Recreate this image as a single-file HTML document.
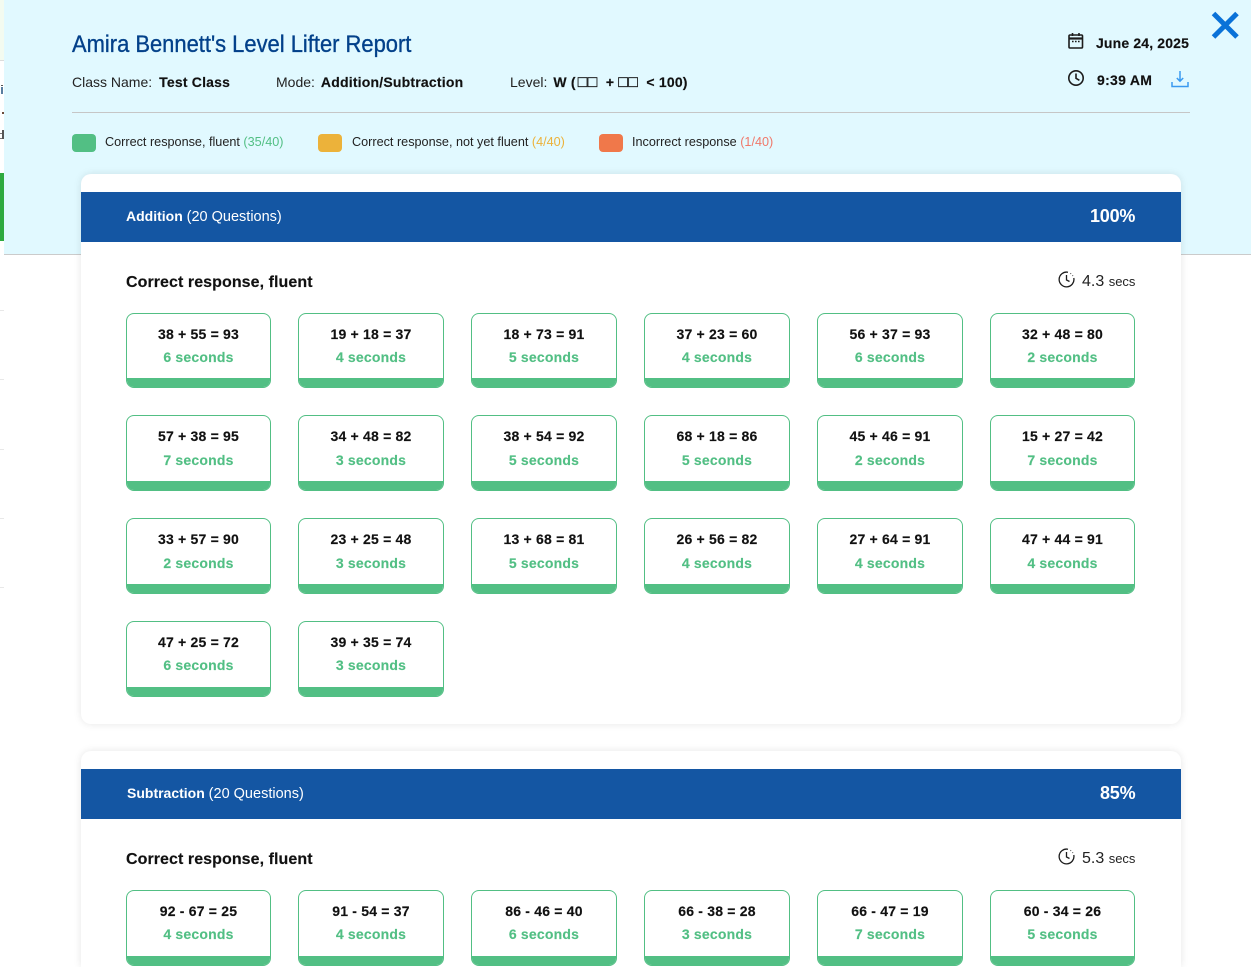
<!DOCTYPE html>
<html><head><meta charset="utf-8"><style>
*{box-sizing:border-box}
html,body{margin:0;padding:0;width:1251px;height:967px;overflow:hidden;background:#fff;font-family:"Liberation Sans",sans-serif;color:#1c1c1c}
#w{position:absolute;left:0;top:0;width:1251px;height:967px;overflow:hidden}
.a{position:absolute;white-space:nowrap}
.left{position:absolute;left:0;width:4px;height:1px;background:#e8e8e8}
#panel{position:absolute;left:4px;top:0;width:1247px;height:255px;background:#e1f9ff;border-bottom:1px solid #cbcbcb}
.sec{position:absolute;left:81px;width:1100px;background:#fff;border-radius:10px;box-shadow:0 0 8px rgba(0,0,0,.1)}
.bar{position:absolute;left:81px;width:1100px;height:50px;background:#1456a3;color:#fff}
.c{position:absolute;width:146px;height:76px;border:1px solid #52bf84;border-radius:8px;background:#fff;overflow:hidden;text-align:center}
.c b{position:absolute;left:0;right:0;top:12px;font-size:14px;line-height:16px;letter-spacing:.2px;color:#111;-webkit-text-stroke:.15px #111}
.c i{position:absolute;left:0;right:0;top:35px;font-style:normal;font-weight:bold;font-size:14px;line-height:16px;letter-spacing:.2px;color:#52bf84;-webkit-text-stroke:.15px #52bf84}
.r i{top:36px}
.c u{position:absolute;left:0;right:0;bottom:0;height:9px;background:#52bf84}
.x1{left:126px;width:145px}.x2{left:298px}.x3{left:471px}.x4{left:644px}.x5{left:817px}.x6{left:990px;width:145px}
.sw{position:absolute;top:134px;width:24px;height:18px;border-radius:4px}
.lg{position:absolute;top:134px;font-size:12.65px;line-height:16px;white-space:nowrap;color:#222}
.m{position:absolute;top:74px;font-size:14px;line-height:17px;white-space:nowrap;color:#222}
.m b{letter-spacing:.2px;color:#111;-webkit-text-stroke:.15px #111}
.q{display:inline-block;width:24px;font-size:16px;line-height:0;font-weight:normal;letter-spacing:.25px;text-align:left;-webkit-text-stroke:.3px #111}
.h{position:absolute;left:126px;font-size:16px;font-weight:bold;line-height:20px;letter-spacing:.07px;white-space:nowrap;color:#111;-webkit-text-stroke:.15px #111}
.t{position:absolute;font-size:16px;line-height:20px;white-space:nowrap;color:#222}
.t small{font-size:13px}
.hd span{font-size:14.5px}
</style></head><body><div id="w">
<div style="position:absolute;left:0;top:0;width:4px;height:60px;background:#f3fbf0"></div>
<div style="position:absolute;left:0;top:60px;width:4px;height:1px;background:#dcdcdc"></div>
<div style="position:absolute;left:0;top:173px;width:4px;height:68px;background:#2eaa3f"></div>
<div style="position:absolute;left:1px;top:85px;width:2px;height:1px;background:#555"></div>
<div style="position:absolute;left:1px;top:87px;width:2px;height:7px;background:#5a7ea0"></div>
<div style="position:absolute;left:2px;top:112px;width:2px;height:2px;background:#6a4a3a"></div>
<div style="position:absolute;left:2px;top:130px;width:1.5px;height:9px;background:#555"></div>
<div style="position:absolute;left:0;top:133px;width:2px;height:1px;background:#777"></div>
<div style="position:absolute;left:0;top:138px;width:2px;height:1px;background:#777"></div>
<div class="left" style="top:310px"></div><div class="left" style="top:379px"></div><div class="left" style="top:449px"></div><div class="left" style="top:518px"></div><div class="left" style="top:587px"></div>

<div id="panel"></div>
<div class="a" style="left:72px;top:30px;font-size:24.5px;line-height:30px;color:#03418a;transform:scaleX(.895);transform-origin:0 0;-webkit-text-stroke:.35px #03418a">Amira Bennett's Level Lifter Report</div>
<div class="m" style="left:72px">Class Name:<b style="margin-left:7px">Test Class</b></div>
<div class="m" style="left:276px">Mode:<b style="margin-left:6px">Addition/Subtraction</b></div>
<div class="m" style="left:510px">Level:<b style="margin-left:6px">W (<span class="q" style="margin-left:2px">□□</span> + <span class="q">□□</span> &lt; 100)</b></div>

<svg class="a" style="left:1067px;top:32px" width="18" height="18" viewBox="0 0 18 18" fill="none" stroke="#1c1c1c" stroke-width="1.6"><rect x="2" y="3" width="13.5" height="13" rx="1"/><path d="M2 6.5h13.5" stroke-width="2.2"/><path d="M5.5 1v3M12 1v3"/><path d="M5 9.5h1.6M8 9.5h1.6M11 9.5h1.6" stroke-width="1.4"/></svg>
<div class="a" style="left:1096px;top:35px;font-size:14px;line-height:17px;font-weight:bold;letter-spacing:.15px;color:#111;-webkit-text-stroke:.15px #111">June 24, 2025</div>
<svg class="a" style="left:1067px;top:69px" width="18" height="18" viewBox="0 0 18 18" fill="none" stroke="#1c1c1c" stroke-width="1.6"><circle cx="9" cy="9" r="7.2"/><path d="M9 4.5V9.3l3.4 2"/></svg>
<div class="a" style="left:1097px;top:72px;font-size:14px;line-height:17px;font-weight:bold;letter-spacing:.3px;color:#111;-webkit-text-stroke:.15px #111">9:39 AM</div>
<svg class="a" style="left:1171px;top:70px" width="18" height="18" viewBox="0 0 18 18" fill="none" stroke="#3a9af0" stroke-width="1.5"><path d="M9 1v10M5.8 8L9 11.2 12.2 8"/><path d="M1 12v4.5h16V12"/></svg>
<svg class="a" style="left:1211px;top:11px" width="29" height="29" viewBox="0 0 29 29" fill="none" stroke="#0a72d8" stroke-width="5"><path d="M2.5 2.5L26 26M26 2.5L2.5 26"/></svg>

<div style="position:absolute;left:72px;top:112px;width:1118px;height:1px;background:#c6c6c6"></div>

<div class="sw" style="left:72px;background:#52bf84"></div>
<div class="lg" style="left:105px">Correct response, fluent <span style="color:#52bf84">(35/40)</span></div>
<div class="sw" style="left:318px;background:#ecb23a"></div>
<div class="lg" style="left:352px">Correct response, not yet fluent <span style="color:#ecb23a">(4/40)</span></div>
<div class="sw" style="left:599px;background:#f0784a"></div>
<div class="lg" style="left:632px">Incorrect response <span style="color:#f0786a">(1/40)</span></div>

<div class="sec" style="top:174px;height:550px"></div>
<div class="bar" style="top:192px"></div>
<div class="a hd" style="left:126px;top:208px;font-size:14px;line-height:17px;color:#fff"><b>Addition</b> <span>(20 Questions)</span></div>
<div class="a" style="left:1090px;top:206px;font-size:18px;line-height:20px;font-weight:bold;letter-spacing:-.2px;color:#fff">100%</div>
<div class="h" style="top:273px">Correct response, fluent</div>
<svg class="a" style="left:1058px;top:271px" width="17" height="17" viewBox="0 0 17 17" fill="none" stroke="#1c1c1c" stroke-width="1.3"><path d="M10 1.2A7.4 7.4 0 1 0 15.8 7"/><path d="M8.5 4v5l3 1.5"/><path d="M12.5 2.4l.5.4M14.5 4.4l.3.5"/></svg>
<div class="t" style="left:1082px;top:272px">4.3 <small>secs</small></div>

<div class="c x1" style="top:313px;height:75px"><b>38 + 55 = 93</b><i>6 seconds</i><u></u></div>
<div class="c x2" style="top:313px;height:75px"><b>19 + 18 = 37</b><i>4 seconds</i><u></u></div>
<div class="c x3" style="top:313px;height:75px"><b>18 + 73 = 91</b><i>5 seconds</i><u></u></div>
<div class="c x4" style="top:313px;height:75px"><b>37 + 23 = 60</b><i>4 seconds</i><u></u></div>
<div class="c x5" style="top:313px;height:75px"><b>56 + 37 = 93</b><i>6 seconds</i><u></u></div>
<div class="c x6" style="top:313px;height:75px"><b>32 + 48 = 80</b><i>2 seconds</i><u></u></div>

<div class="c r x1" style="top:415px"><b>57 + 38 = 95</b><i>7 seconds</i><u></u></div>
<div class="c r x2" style="top:415px"><b>34 + 48 = 82</b><i>3 seconds</i><u></u></div>
<div class="c r x3" style="top:415px"><b>38 + 54 = 92</b><i>5 seconds</i><u></u></div>
<div class="c r x4" style="top:415px"><b>68 + 18 = 86</b><i>5 seconds</i><u></u></div>
<div class="c r x5" style="top:415px"><b>45 + 46 = 91</b><i>2 seconds</i><u></u></div>
<div class="c r x6" style="top:415px"><b>15 + 27 = 42</b><i>7 seconds</i><u></u></div>

<div class="c r x1" style="top:518px"><b>33 + 57 = 90</b><i>2 seconds</i><u></u></div>
<div class="c r x2" style="top:518px"><b>23 + 25 = 48</b><i>3 seconds</i><u></u></div>
<div class="c r x3" style="top:518px"><b>13 + 68 = 81</b><i>5 seconds</i><u></u></div>
<div class="c r x4" style="top:518px"><b>26 + 56 = 82</b><i>4 seconds</i><u></u></div>
<div class="c r x5" style="top:518px"><b>27 + 64 = 91</b><i>4 seconds</i><u></u></div>
<div class="c r x6" style="top:518px"><b>47 + 44 = 91</b><i>4 seconds</i><u></u></div>

<div class="c x1" style="top:621px"><b>47 + 25 = 72</b><i>6 seconds</i><u></u></div>
<div class="c x2" style="top:621px"><b>39 + 35 = 74</b><i>3 seconds</i><u></u></div>

<div class="sec" style="top:751px;height:216px;border-radius:10px 10px 0 0"></div>
<div class="bar" style="top:769px"></div>
<div class="a hd" style="left:127px;top:785px;font-size:14px;line-height:17px;color:#fff"><b>Subtraction</b> <span>(20 Questions)</span></div>
<div class="a" style="left:1100px;top:783px;font-size:18px;line-height:20px;font-weight:bold;letter-spacing:-.2px;color:#fff">85%</div>
<div class="h" style="top:850px">Correct response, fluent</div>
<svg class="a" style="left:1058px;top:848px" width="17" height="17" viewBox="0 0 17 17" fill="none" stroke="#1c1c1c" stroke-width="1.3"><path d="M10 1.2A7.4 7.4 0 1 0 15.8 7"/><path d="M8.5 4v5l3 1.5"/><path d="M12.5 2.4l.5.4M14.5 4.4l.3.5"/></svg>
<div class="t" style="left:1082px;top:849px">5.3 <small>secs</small></div>

<div class="c x1" style="top:890px"><b>92 - 67 = 25</b><i>4 seconds</i><u></u></div>
<div class="c x2" style="top:890px"><b>91 - 54 = 37</b><i>4 seconds</i><u></u></div>
<div class="c x3" style="top:890px"><b>86 - 46 = 40</b><i>6 seconds</i><u></u></div>
<div class="c x4" style="top:890px"><b>66 - 38 = 28</b><i>3 seconds</i><u></u></div>
<div class="c x5" style="top:890px"><b>66 - 47 = 19</b><i>7 seconds</i><u></u></div>
<div class="c x6" style="top:890px"><b>60 - 34 = 26</b><i>5 seconds</i><u></u></div>
</div></body></html>
